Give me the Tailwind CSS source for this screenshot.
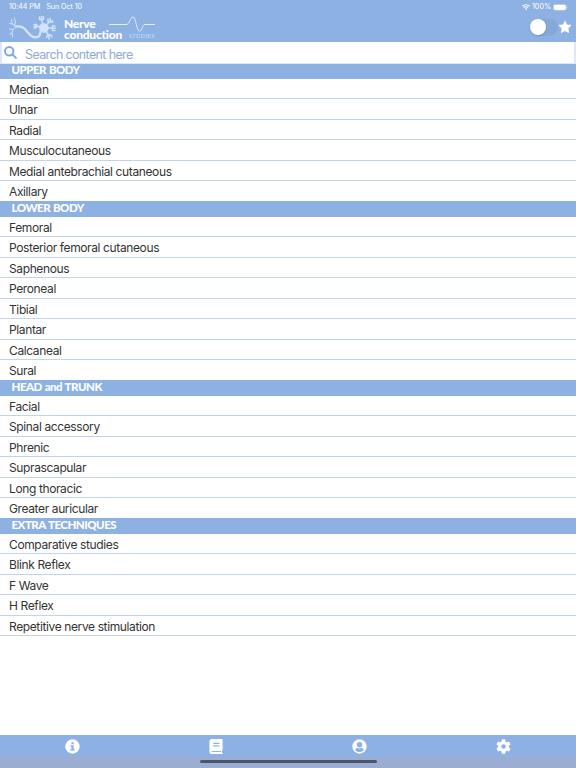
<!DOCTYPE html>
<html lang="en">
<head>
<meta charset="utf-8">
<meta name="viewport" content="width=device-width, initial-scale=1">
<title>Nerve conduction studies</title>
<script src="https://cdn.jsdelivr.net/npm/@tailwindcss/browser@4"></script>
</head>
<body class="bg-white">
<div class="flex flex-col w-[576px] h-[768px] overflow-hidden bg-white font-['Inter',sans-serif] text-[#333]">

  <header class="h-[42px] shrink-0 bg-[#8db1e2] text-white">
    <div class="flex items-center justify-between h-[14px] pl-[9px] pr-[8px] text-[7.2px] leading-[14px]">
      <div class="flex gap-[6px] tracking-[-.08px]"><span>10:44 PM</span><span>Sun Oct 10</span></div>
      <div class="flex items-center gap-[2px]">
        <svg class="w-[8px] h-[6px]" viewBox="0 0 16 12" fill="none" stroke="#fff" stroke-width="2.2"><path d="M1 4.5a10 10 0 0 1 14 0M3.7 7.3a6 6 0 0 1 8.6 0"/><path d="M8 12 5.6 9.6a3.4 3.4 0 0 1 4.8 0z" fill="#fff" stroke="none"/></svg>
        <span>100%</span>
        <svg class="w-[15px] h-[7px]" viewBox="0 0 15 7"><rect x=".3" y=".3" width="13" height="6.2" rx="1.8" fill="#fff" fill-opacity=".5"/><rect x="1" y="1" width="11.6" height="4.8" rx="1.2" fill="#fff"/><path d="M14 2.4v2" stroke="#fff" stroke-opacity=".6" stroke-width=".8"/></svg>
      </div>
    </div>
    <div class="flex h-[28px]">
      <!-- neuron -->
      <svg class="w-[64px] h-[28px] shrink-0" viewBox="0 14 64 28" fill="none" stroke="#d2e2fb" stroke-linecap="round" stroke-linejoin="round">
        <path d="M16 26.500c6-.5 8 1 11 5s7 7.500 11.500 5c2.500-1.800 1-5 4-8.500" stroke-width="2.300"/>
        <path d="M16 26.500 12.500 24l-3-.5M12.500 24l-1-5M14.500 25l1-3-1-4M16 26.500l-3 3-3.500-.5M13 29.500l-1.500 4-2 .5M12 33l.5 4" stroke-width="1"/>
        <circle cx="43.800" cy="28" r="4.800" fill="#d2e2fb" stroke="none"/>
        <path d="M43.500 27l-2-7M44 27l5.500-5M45 28h7M44 29l4.500 6M41.500 27.500l-5-1.500" stroke-width="1.400"/>
        <path d="M39.500 17v2.500h4v-3M41.500 16.500v3M48 19v3h4.500v-1.500M50.300 18.500v3M55 26h-2.500v4.500H55M52.500 28.200h3M46.500 37.500l1-2.500h3.500l1 2M49 36v3M34 24.500l2.500 0 0 3-2 .5M34 26.500h2" stroke-width="1.500"/>
      </svg>
      <h1 class="w-[45px] shrink-0 pt-[4px] font-['Lato',sans-serif] text-[12px] leading-[11px] tracking-[-.23px] font-black whitespace-nowrap"><span class="block">Nerve</span><span class="block">conduction</span></h1>
      <div class="w-[48px] shrink-0 pt-[2px]">
        <svg class="w-[46px] h-[16px]" viewBox="0 0 46 16" fill="none" stroke="#e3edfc" stroke-width="1"><path d="M0 8.500h17c4 0 4-7.500 7-7.500s3.500 14 6.500 14 2.500-6.500 5.500-6.500h10"/></svg>
        <p class="pl-[20px] font-['Liberation_Serif',serif] italic text-[5.5px] leading-[8px] tracking-[.6px] text-[#d5e3f9]">STUDIES</p>
      </div>
      <div class="flex items-center ml-auto pr-[4px] pb-[2px]">
        <div class="w-[28px] h-[17px] rounded-full bg-[#86a8d7]"><div class="size-[16px] mt-[.5px] rounded-full bg-white shadow-sm"></div></div>
        <svg class="size-[14px]" viewBox="0 0 24 24" fill="#fff" stroke="#fff" stroke-linejoin="round"><path d="m12 1.500 3.200 6.700 7.300 1-5.300 5.200 1.300 7.400L12 18.300l-6.500 3.500 1.300-7.400L1.500 9.200l7.300-1z"/></svg>
      </div>
    </div>
  </header>

  <div class="flex items-center h-[21.500px] shrink-0 pl-[2px] border-x-2 border-b border-[#dbe7fa] bg-white">
    <svg class="w-[13px] h-[13px] mt-px" viewBox="0 0 13 13" fill="none" stroke="#82a9df" stroke-width="2" stroke-linecap="round"><circle cx="5.200" cy="5.200" r="4.200"/><path d="m8.500 8.500 3.400 3.400"/></svg>
    <span class="ml-[8px] pt-[6px] text-[12.500px] leading-[16px] tracking-[-.64px] text-[#92abd3]">Search content here</span>
  </div>

  <main id="list" class="grow"></main>

  <nav class="h-[33px] shrink-0 bg-[#8db1e2]">
    <div class="grid grid-cols-4 h-[22px] items-center justify-items-center">
      <svg class="size-[15px]" viewBox="0 0 24 24"><circle cx="12" cy="12" r="11.500" fill="#fff"/><path d="M10.300 5h3.600v3.300h-3.600zM8.800 10h5v6h1.500v2.300H8.700V16h1.600v-3.700H8.800z" fill="#8db1e2"/></svg>
      <svg class="w-[14px] h-[15px]" viewBox="0 0 22 24"><path d="M4.500 0H20a1.500 1.500 0 0 1 1.500 1.500v16l-1 1.200v3.300l1 .5V24h-17A4 4 0 0 1 .5 20V4a4 4 0 0 1 4-4z" fill="#fff"/><path d="M6.500 7h10M6.500 11h10M4 20h15" stroke="#8db1e2" stroke-width="1.700"/></svg>
      <svg class="size-[15px] mr-px" viewBox="0 0 24 24"><circle cx="12" cy="12" r="11.500" fill="#fff"/><circle cx="12" cy="9" r="4.400" fill="#8db1e2"/><path d="M5 17.500c1-2.500 3-3 4.500-3 1.500.7 3.500.7 5 0 1.500 0 3.500.5 4.500 3-3.800 4.300-10.200 4.300-14 0z" fill="#8db1e2"/></svg>
      <svg class="size-[15px] mr-px" viewBox="0 0 24 24"><g fill="#fff"><circle cx="12" cy="12" r="8.500"/><rect x="9" y=".5" width="6" height="23" rx="1.300"/><rect x="9" y=".5" width="6" height="23" rx="1.300" transform="rotate(60 12 12)"/><rect x="9" y=".5" width="6" height="23" rx="1.300" transform="rotate(120 12 12)"/></g><circle cx="12" cy="12" r="3.700" fill="#8db1e2"/></svg>
    </div>
    <div class="flex justify-center h-[11px] pt-[3px] bg-[#9badd1]"><div class="w-[177px] h-[3px] rounded-full bg-[#4d5669]"></div></div>
  </nav>
</div>

<script>
  const sections = [
    ['UPPER BODY', ['Median', 'Ulnar', 'Radial', 'Musculocutaneous', 'Medial antebrachial cutaneous', 'Axillary']],
    ['LOWER BODY', ['Femoral', 'Posterior femoral cutaneous', 'Saphenous', 'Peroneal', 'Tibial', 'Plantar', 'Calcaneal', 'Sural']],
    ['HEAD and TRUNK', ['Facial', 'Spinal accessory', 'Phrenic', 'Suprascapular', 'Long thoracic', 'Greater auricular']],
    ['EXTRA TECHNIQUES', ['Comparative studies', 'Blink Reflex', 'F Wave', 'H Reflex', 'Repetitive nerve stimulation']],
  ];

  document.getElementById('list').innerHTML = sections.map(([title, items]) => `
    <section class="group">
      <h2 class="h-[15px] pl-[11.500px] bg-[#8db1e2] font-['Lato',sans-serif] text-[11.500px] leading-[12px] tracking-[-.5px] [word-spacing:.6px] font-black text-white">${title}</h2>
      <ul>
        ${items.map(item => `<li class="h-[20.500px] pl-[9px] border-b border-[#c3d3ea] last:border-[#8db1e2] group-last:last:border-[#c3d3ea] text-[12px] leading-[21px] tracking-[-.38px]">${item}</li>`).join('')}
      </ul>
    </section>
  `).join('');
</script>
</body>
</html>
